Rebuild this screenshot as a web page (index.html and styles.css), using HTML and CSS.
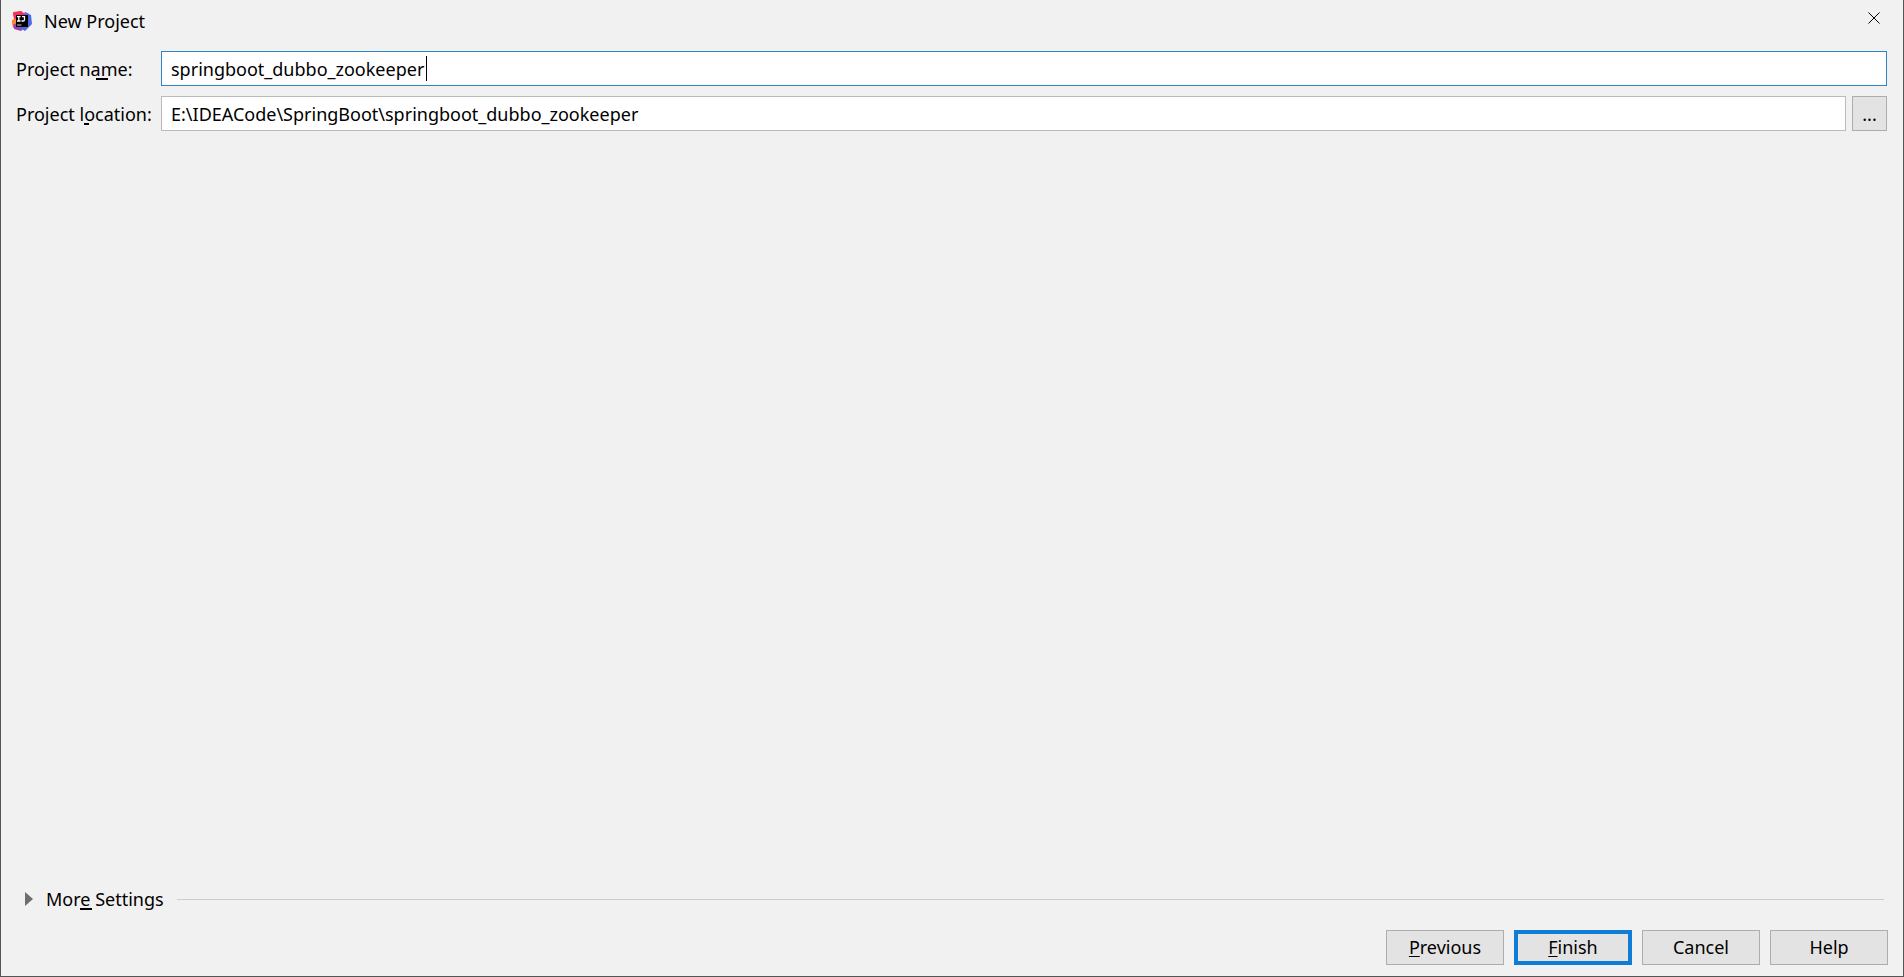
FILE: index.html
```html
<!DOCTYPE html>
<html lang="en">
<head>
<meta charset="utf-8">
<title>New Project</title>
<link rel="stylesheet" href="styles.css">
</head>
<body>
<form class="dialog">
  <header class="titlebar">
    <svg class="logo" viewBox="0 0 20 20" aria-hidden="true">
      <path fill="#f9543b" d="M1 1 9 0 13 4 8 12 1 17 0 10 2 8Z"/>
      <path fill="#f72c64" d="M1 2 9 0 13 3 9 8 2 7Z"/>
      <path fill="#fc8a32" d="M0 9 4 8 5 13 1 13Z"/>
      <path fill="#9b3fb5" d="M2 13 8 12 11 18 9 20 2 18Z"/>
      <path fill="#4a6be0" d="M13 1 19 4 20 13 13 20 8 17 11 8Z"/>
      <path fill="#7a5ad8" d="M13 1 17 3 15 6 11 5Z"/>
      <path d="M4 4H16V16H4Z"/>
      <path fill="none" stroke="#fff" stroke-width="1.3" d="M5 5.6H8.600M6.800 5.600V10M5 10H8.600M10 5.600H12.500V8.700Q12.500 10 11 10H9.500"/>
      <path fill="#ccc" d="M5 13.500H9.500V14.500H5Z"/>
    </svg>
    <h1 class="title">New Project</h1>
    <button class="close" type="button" aria-label="Close">
      <svg class="close-icon" viewBox="0 0 12 12" aria-hidden="true"><path d="M.5.500 11.500 11.500M11.500.500.500 11.500"/></svg>
    </button>
  </header>
  <main class="fields">
    <label class="label" for="name">Project na<span class="mnemonic">m</span>e:</label>
    <div class="field">
      <input class="input input-active" id="name" type="text" value="springboot_dubbo_zookeeper" spellcheck="false">
      <span class="caret"></span>
    </div>
    <label class="label" for="location">Project l<span class="mnemonic mnemonic-narrow">o</span>cation:</label>
    <div class="field">
      <input class="input" id="location" type="text" value="E:\IDEACode\SpringBoot\springboot_dubbo_zookeeper" spellcheck="false">
      <button class="browse" type="button" aria-label="Browse">...</button>
    </div>
  </main>
  <div class="more">
    <button class="more-toggle" type="button" aria-expanded="false">
      <svg class="arrow" viewBox="0 0 8 14" aria-hidden="true"><path d="M0 0 8 7 0 14Z"/></svg>
      <span>Mor<span class="mnemonic mnemonic-start">e</span> Settings</span>
    </button>
    <span class="rule"></span>
  </div>
  <footer class="actions">
    <button class="action" type="button"><u>P</u>revious</button>
    <button class="action action-default" type="button"><u>F</u>inish</button>
    <button class="action" type="button">Cancel</button>
    <button class="action" type="button">Help</button>
  </footer>
</form>
</body>
</html>
```
FILE: styles.css
```css
* { box-sizing: border-box; }

body {
  margin: 0;
  font: 18px/24px "Noto Sans", "Open Sans", sans-serif;
  color: #000;
  background: #f1f1f1;
}

button, input { font: inherit; color: inherit; }

.dialog {
  display: flex;
  flex-direction: column;
  min-height: 100vh;
  border: 1px solid #555;
  border-top: 0;
}

.titlebar {
  display: flex;
  align-items: center;
  height: 41px;
  padding: 0 15px 0 11px;
}

.logo { width: 20px; height: 20px; }

.title {
  flex: 1;
  margin: 0 0 0 12px;
  font-size: 18px;
  font-weight: 400;
}

.close {
  display: flex;
  align-items: center;
  justify-content: center;
  width: 28px;
  height: 36px;
  padding: 0;
  border: 0;
  background: none;
  align-self: flex-start;
}

.close-icon { width: 12px; height: 12px; fill: none; stroke: #000; }

.fields {
  flex: 1;
  display: grid;
  grid-template-columns: 145px 1fr;
  align-content: start;
  row-gap: 10px;
  padding: 10px 16px 0 15px;
}

.label { line-height: 36px; height: 35px; white-space: nowrap; }

.field { position: relative; display: flex; gap: 6px; }

.input {
  flex: 1;
  min-width: 0;
  height: 35px;
  padding: 0 9px;
  border: 1px solid #bbb;
  background: #fff;
  outline: 0;
}

.input-active { border-color: #2e86c4; }

.caret {
  position: absolute;
  left: 265px;
  top: 5px;
  width: 1px;
  height: 25px;
  background: #000;
}

.browse {
  width: 35px;
  height: 35px;
  padding: 0;
  border: 1px solid #adadad;
  background: #e3e3e3;
}

.mnemonic { position: relative; }

.mnemonic::after {
  content: "";
  position: absolute;
  left: -5px;
  bottom: 1px;
  width: 12px;
  height: 2px;
  background: #000;
}

.mnemonic-narrow::after { width: 5px; left: 0; }
.mnemonic-start::after { left: 0; }

.more {
  display: flex;
  align-items: center;
  gap: 13px;
  padding: 0 19px 0 24px;
}

.more-toggle {
  display: flex;
  align-items: center;
  gap: 13px;
  padding: 0;
  border: 0;
  background: none;
}

.arrow { width: 8px; height: 14px; fill: #6e6e6e; }

.rule { flex: 1; height: 1px; background: #ccc; }

.actions {
  display: flex;
  justify-content: flex-end;
  gap: 10px;
  padding: 19px 15px 11px;
}

.action {
  width: 118px;
  height: 35px;
  padding: 0 0 2px;
  border: 1px solid #adadad;
  background: #e3e3e3;
}

.action u { text-decoration-thickness: 1px; text-underline-offset: 2px; }

.action-default { border: 4px solid #0f7dd6; }
```
